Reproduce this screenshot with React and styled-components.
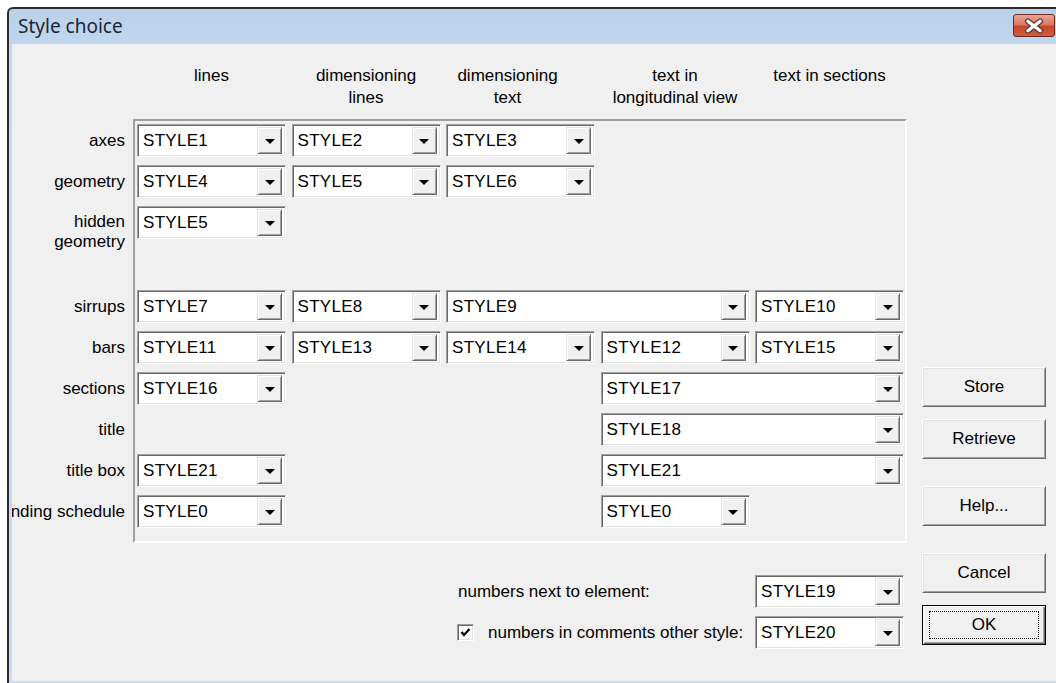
import React from "react";
import styled, { createGlobalStyle } from "styled-components";

const GlobalStyle = createGlobalStyle`
  html, body {
    margin: 0;
    padding: 0;
    background: #fff;
    overflow: hidden;
  }
  body {
    font-family: "Liberation Sans", Arial, sans-serif;
    font-size: 17px;
    color: #000;
  }
`;

const rows = [
	{ label: "axes", row: 2, combos: [[1, "STYLE1"], [2, "STYLE2"], [3, "STYLE3"]] },
	{ label: "geometry", row: 3, combos: [[1, "STYLE4"], [2, "STYLE5"], [3, "STYLE6"]] },
	{ label: ["hidden", "geometry"], row: 4, combos: [[1, "STYLE5"]] },
	{
		label: "sirrups",
		row: 6,
		combos: [[1, "STYLE7"], [2, "STYLE8"], [3, "STYLE9", 2], [5, "STYLE10"]],
	},
	{
		label: "bars",
		row: 7,
		combos: [[1, "STYLE11"], [2, "STYLE13"], [3, "STYLE14"], [4, "STYLE12"], [5, "STYLE15"]],
	},
	{ label: "sections", row: 8, combos: [[1, "STYLE16"], [4, "STYLE17", 2]] },
	{ label: "title", row: 9, combos: [[4, "STYLE18", 2]] },
	{ label: "title box", row: 10, combos: [[1, "STYLE21"], [4, "STYLE21", 2]] },
	{ label: "bending schedule", row: 11, combos: [[1, "STYLE0"], [4, "STYLE0"]] },
];

const headers = [
	{ col: 1, text: ["lines"] },
	{ col: 2, text: ["dimensioning", "lines"] },
	{ col: 3, text: ["dimensioning", "text"], shift: 26 },
	{ col: 4, text: ["text in", "longitudinal view"] },
	{ col: 5, text: ["text in sections"] },
];

function Combo({ value, col, row, span = 1 }) {
	return (
		<ComboBox $col={col} $row={row} $span={span}>
			<ComboText>{value}</ComboText>
			<DropButton>
				<Arrow />
			</DropButton>
		</ComboBox>
	);
}

function CloseGlyph() {
	return (
		<svg width="42" height="22" viewBox="0 0 42 22">
			<path d="M14.5 6 L27.5 16 M27.5 6 L14.5 16" stroke="#5a3a38" strokeWidth="6" strokeLinecap="round" />
			<path d="M14.5 6 L27.5 16 M27.5 6 L14.5 16" stroke="#ffffff" strokeWidth="3.4" strokeLinecap="round" />
		</svg>
	);
}

export default function App() {
	return (
		<Screen>
			<GlobalStyle />
			<Window>
				<TitleBar>
					<Title>Style choice</Title>
					<CloseButton>
						<CloseGlyph />
					</CloseButton>
				</TitleBar>
				<Client>
					<Table>
						<Frame />
						{headers.map((h) => (
							<Header key={h.col} $col={h.col} $shift={h.shift || 0}>
								{h.text.map((t) => (
									<div key={t}>{t}</div>
								))}
							</Header>
						))}
						{rows.map((r) => (
							<React.Fragment key={r.row}>
								<Label $row={r.row} $multi={Array.isArray(r.label)}>
									{Array.isArray(r.label) ? (
										<span>
											{r.label[0]}
											<br />
											{r.label[1]}
										</span>
									) : (
										<span>{r.label}</span>
									)}
								</Label>
								{r.combos.map(([col, value, span]) => (
									<Combo key={col} col={col} row={r.row} span={span} value={value} />
								))}
							</React.Fragment>
						))}
						<BottomLabel $row={13}>numbers next to element:</BottomLabel>
						<Combo col={5} row={13} value="STYLE19" />
						<BottomLabel $row={14}>
							<CheckBox>
								<svg width="11" height="11" viewBox="0 0 11 11">
									<path d="M1.5 5 L4 8 L9.5 2" stroke="#000" strokeWidth="2.2" fill="none" />
								</svg>
							</CheckBox>
							numbers in comments other style:
						</BottomLabel>
						<Combo col={5} row={14} value="STYLE20" />
					</Table>
					<ButtonColumn>
						<PushButton $space={0}>Store</PushButton>
						<PushButton $space={12}>Retrieve</PushButton>
						<PushButton $space={27}>Help...</PushButton>
						<PushButton $space={27}>Cancel</PushButton>
						<PushButton $space={12} $default>
							<FocusRing>OK</FocusRing>
						</PushButton>
					</ButtonColumn>
				</Client>
			</Window>
		</Screen>
	);
}

const Screen = styled.div`
	width: 1056px;
	height: 683px;
	padding: 7px 0 0 7px;
	box-sizing: border-box;
	overflow: hidden;
`;

const Window = styled.div`
	width: 1049px;
	height: 676px;
	box-sizing: border-box;
	display: flex;
	flex-direction: column;
	background: linear-gradient(#b8d0e9, #c3d8ee 40px, #c9dcf0);
	border-top: 2px solid #2c2c2c;
	border-left: 2px solid #2c2c2c;
	border-top-left-radius: 6px;
	padding: 0 0 2px 3px;
`;

const TitleBar = styled.div`
	height: 35px;
	display: flex;
	justify-content: space-between;
	align-items: flex-start;
	padding-left: 6px;
`;

const Title = styled.div`
	font-family: "Noto Sans", "Open Sans", sans-serif;
	font-size: 19px;
	line-height: 34px;
	color: #1c2536;
`;

const CloseButton = styled.div`
	width: 42px;
	height: 23px;
	margin-top: 5px;
	margin-right: 1px;
	box-sizing: border-box;
	border: 1px solid #6a2a22;
	border-radius: 3px;
	background: linear-gradient(#eaa493 0%, #dc7a64 45%, #c8442b 55%, #d45e3f 100%);
	display: flex;
	align-items: center;
	justify-content: center;
	overflow: hidden;
`;

const Client = styled.div`
	flex: 1;
	background: #f0f0f0;
	display: flex;
	align-items: flex-start;
	overflow: hidden;
`;

const Table = styled.div`
	display: grid;
	padding-top: 21px;
	grid-template-columns: 121px 4px 149px 5.5px 149px 5.5px 149px 5.5px 149px 5.5px 149px 3px;
	grid-template-rows: 51px repeat(3, 33px) 35px repeat(6, 33px) 31px 33px 33px;
	row-gap: 8px;
	flex-shrink: 0;
`;

const Frame = styled.div`
	grid-column: 2 / -1;
	grid-row: 2 / 12;
	margin: -5px 0 -15px;
	border-top: 2px solid #a0a0a0;
	border-left: 2px solid #a0a0a0;
	border-right: 2px solid #fff;
	border-bottom: 2px solid #fff;
`;

const Header = styled.div`
	grid-row: 1;
	grid-column: ${(p) => p.$col * 2 + 1};
	align-self: start;
	text-align: center;
	line-height: 22px;
	white-space: nowrap;
	padding-right: ${(p) => p.$shift}px;
`;

const Label = styled.div`
	grid-column: 1;
	grid-row: ${(p) => p.$row};
	display: flex;
	justify-content: flex-end;
	align-items: ${(p) => (p.$multi ? "flex-start" : "center")};
	padding-top: ${(p) => (p.$multi ? "6px" : "0")};
	padding-right: 8px;
	line-height: ${(p) => (p.$multi ? "20px" : "22px")};
	white-space: nowrap;
	text-align: right;
`;

const BottomLabel = styled.div`
	grid-column: 7 / 10;
	grid-row: ${(p) => p.$row};
	display: flex;
	align-items: center;
	gap: 14px;
	padding-left: 12px;
	white-space: nowrap;
`;

const CheckBox = styled.div`
	width: 17px;
	height: 17px;
	margin-left: -1px;
	box-sizing: border-box;
	background: #fff;
	border: 1px solid;
	border-color: #a0a0a0 #fff #fff #a0a0a0;
	box-shadow: inset 1px 1px 0 #696969, inset -1px -1px 0 #e3e3e3;
	display: flex;
	align-items: center;
	justify-content: center;
`;

const ComboBox = styled.div`
	grid-row: ${(p) => p.$row};
	grid-column: ${(p) => `${p.$col * 2 + 1} / ${p.$col * 2 + 2 + (p.$span - 1) * 2}`};
	height: 33px;
	box-sizing: border-box;
	display: flex;
	background: #fff;
	border: 1px solid;
	border-color: #a0a0a0 #fff #fff #a0a0a0;
	box-shadow: inset 1px 1px 0 #696969, inset -1px -1px 0 #e3e3e3;
	padding: 2px 3px 2px 2px;
`;

const ComboText = styled.div`
	flex: 1;
	display: flex;
	align-items: center;
	padding-left: 3px;
	letter-spacing: 0.3px;
	padding-top: 1px;
`;

const DropButton = styled.div`
	width: 25px;
	box-sizing: border-box;
	background: #f0f0f0;
	border: 1px solid;
	border-color: #e3e3e3 #696969 #696969 #e3e3e3;
	box-shadow: inset 1px 1px 0 #fff, inset -1px -1px 0 #a0a0a0;
	display: flex;
	align-items: center;
	justify-content: center;
`;

const Arrow = styled.div`
	width: 0;
	height: 0;
	border-left: 5px solid transparent;
	border-right: 5px solid transparent;
	border-top: 5px solid #000;
	margin-top: 1px;
`;

const ButtonColumn = styled.div`
	display: flex;
	flex-direction: column;
	margin-left: 15px;
	padding-top: 323px;
`;

const PushButton = styled.div`
	width: 124px;
	height: 40px;
	margin-top: ${(p) => p.$space}px;
	box-sizing: border-box;
	background: #f0f0f0;
	border: 1px solid;
	border-color: ${(p) => (p.$default ? "#000" : "#fff #696969 #696969 #fff")};
	box-shadow: ${(p) =>
		p.$default
			? "inset 1px 1px 0 #fff, inset -1px -1px 0 #696969, inset -2px -2px 0 #a0a0a0"
			: "inset 1px 1px 0 #e3e3e3, inset -1px -1px 0 #a0a0a0"};
	display: flex;
	align-items: center;
	justify-content: center;
	padding: ${(p) => (p.$default ? "5px 6px" : "0")};
`;

const FocusRing = styled.div`
	width: 100%;
	height: 100%;
	box-sizing: border-box;
	border: 1px dotted #000;
	display: flex;
	align-items: center;
	justify-content: center;
`;
